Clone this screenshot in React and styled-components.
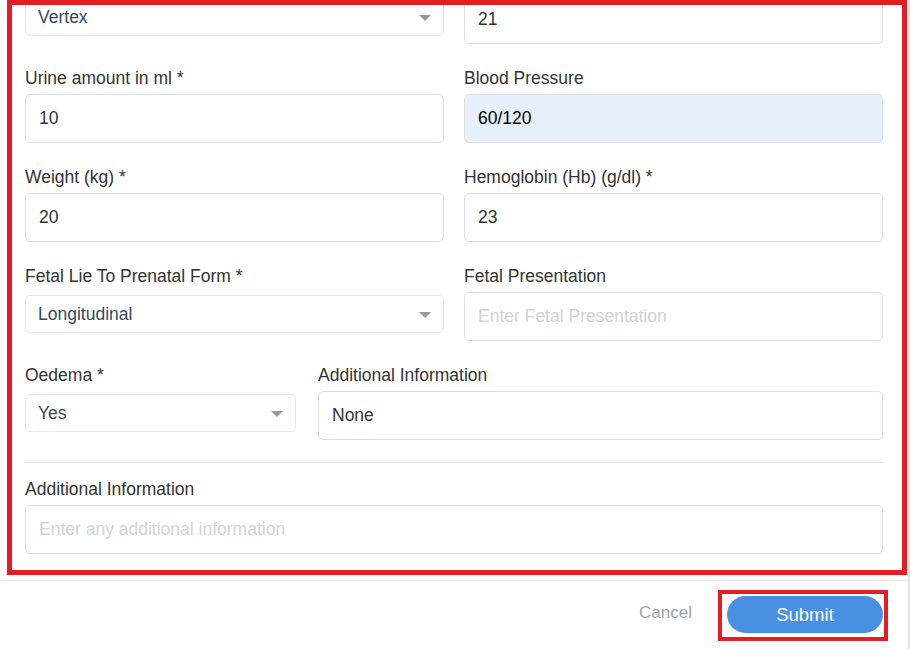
import React from "react";
import styled, { createGlobalStyle } from "styled-components";

// ----- Global -----
const GlobalStyle = createGlobalStyle`
  html, body {
    margin: 0;
    padding: 0;
    background: #ffffff;
  }
  body {
    font-family: "Liberation Sans", Arial, sans-serif;
  }
  * {
    box-sizing: border-box;
  }
`;

// ----- Styled Components -----
const Panel = styled.div`
  width: 910px;
  height: 649px;
  border-right: 2px solid #e4e4e4;
  background: #fff;
  display: flex;
  flex-direction: column;
  overflow: hidden;
`;

const Highlight = styled.div`
  margin-left: 7px;
  width: 900px;
  height: 575px;
  border: 5px solid #e31d23;
  overflow: hidden;
  flex-shrink: 0;
`;

const Form = styled.div`
  margin-top: -10px;
  padding: 0 19px 16px 13px;
  display: flex;
  flex-direction: column;
`;

const Rows = styled.div`
  display: flex;
  flex-direction: column;
  gap: 24px;
`;

const Row = styled.div`
  display: grid;
  grid-template-columns: ${props => props.cols || "1fr 1fr"};
  column-gap: ${props => props.gap || "20px"};
`;

const Field = styled.div`
  display: flex;
  flex-direction: column;
  min-width: 0;
`;

const Label = styled.label`
  font-size: 17.5px;
  line-height: 20px;
  color: #333;
  margin-bottom: 6px;
  white-space: nowrap;
`;

const Input = styled.input`
  height: 49px;
  width: 100%;
  padding: 0 13px;
  border: 1px solid #dcdfe6;
  border-radius: 5px;
  font-family: "Liberation Sans", Arial, sans-serif;
  font-size: 17.5px;
  color: ${props => (props.autofilled ? "#000" : "#333")};
  background: ${props => (props.autofilled ? "#e8f0fe" : "#fff")};
  outline: none;
  &::placeholder {
    color: #cfd3db;
  }
`;

const Select = styled.div`
  margin-top: 3px;
  height: 38px;
  border: 1px solid #e8e8e8;
  border-radius: 5px;
  padding: 0 12px;
  display: flex;
  align-items: center;
  justify-content: space-between;
  font-size: 17.5px;
  color: #35495e;
  background: #fff;
`;

const Caret = styled.span`
  width: 0;
  height: 0;
  border-style: solid;
  border-width: 6px 6px 0;
  border-color: #999 transparent transparent;
  margin-top: 2px;
`;

const Divider = styled.hr`
  border: none;
  border-top: 1px solid #eaeaea;
  margin: 22px 0 16px;
  height: 0;
`;

const Footer = styled.div`
  margin-top: 5px;
  border-top: 1px solid #e6e6e6;
  display: flex;
  justify-content: flex-end;
  align-items: flex-start;
  padding: 9px 20px 0 0;
  gap: 26px;
`;

const CancelButton = styled.button`
  border: none;
  background: none;
  padding: 0;
  margin-top: 13px;
  font-family: "Liberation Sans", Arial, sans-serif;
  font-size: 17px;
  color: #9aa1ad;
  cursor: pointer;
`;

const SubmitFrame = styled.div`
  border: 4px solid #e31d23;
  padding: 2px 1px 4px 5px;
`;

const SubmitButton = styled.button`
  width: 156px;
  height: 37px;
  border: none;
  border-radius: 19px;
  background: #4a90e2;
  color: #fff;
  font-family: "Liberation Sans", Arial, sans-serif;
  font-size: 18.5px;
  cursor: pointer;
`;

const SelectBox = ({ value }) => (
  <Select>
    <span>{value}</span>
    <Caret />
  </Select>
);

function App() {
  return (
    <>
      <GlobalStyle />
      <Panel>
        <Highlight>
          <Form>
            <Rows>
              <Row>
                <Field>
                  <SelectBox value="Vertex" />
                </Field>
                <Field>
                  <Input defaultValue="21" />
                </Field>
              </Row>

              <Row>
                <Field>
                  <Label>Urine amount in ml *</Label>
                  <Input defaultValue="10" />
                </Field>
                <Field>
                  <Label>Blood Pressure</Label>
                  <Input defaultValue="60/120" autofilled />
                </Field>
              </Row>

              <Row>
                <Field>
                  <Label>Weight (kg) *</Label>
                  <Input defaultValue="20" />
                </Field>
                <Field>
                  <Label>Hemoglobin (Hb) (g/dl) *</Label>
                  <Input defaultValue="23" />
                </Field>
              </Row>

              <Row>
                <Field>
                  <Label>Fetal Lie To Prenatal Form *</Label>
                  <SelectBox value="Longitudinal" />
                </Field>
                <Field>
                  <Label>Fetal Presentation</Label>
                  <Input placeholder="Enter Fetal Presentation" />
                </Field>
              </Row>

              <Row cols="271px 1fr" gap="22px">
                <Field>
                  <Label>Oedema *</Label>
                  <SelectBox value="Yes" />
                </Field>
                <Field>
                  <Label>Additional Information</Label>
                  <Input defaultValue="None" />
                </Field>
              </Row>
            </Rows>

            <Divider />

            <Field>
              <Label>Additional Information</Label>
              <Input placeholder="Enter any additional information" />
            </Field>
          </Form>
        </Highlight>

        <Footer>
          <CancelButton>Cancel</CancelButton>
          <SubmitFrame>
            <SubmitButton>Submit</SubmitButton>
          </SubmitFrame>
        </Footer>
      </Panel>
    </>
  );
}

export default App;
